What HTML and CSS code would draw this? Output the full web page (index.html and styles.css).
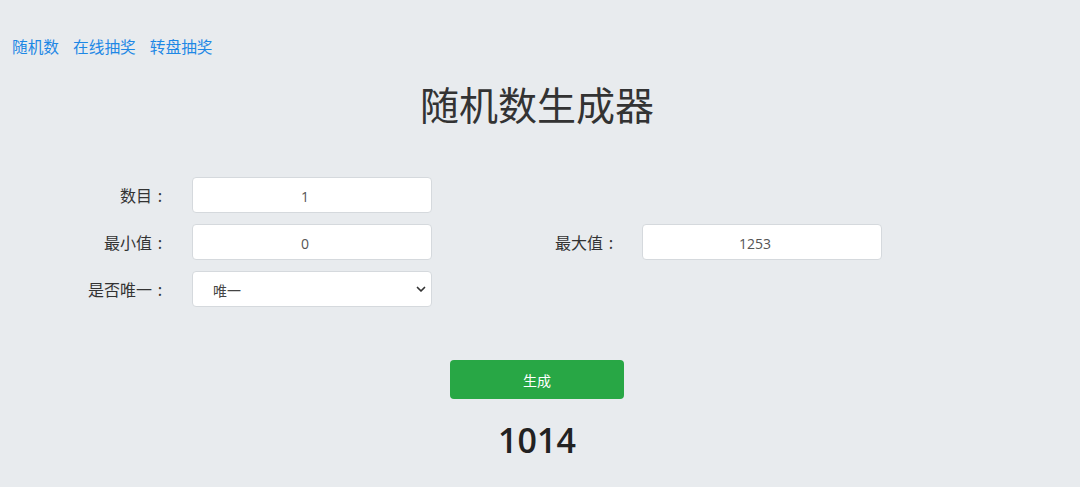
FILE: index.html
```html
<!DOCTYPE html>
<html lang="zh">
<head>
<meta charset="utf-8">
<title>随机数生成器</title>
<link rel="stylesheet" href="styles.css">
</head>
<body>
<div class="page">
  <nav class="nav">
    <a href="#">随机数</a>
    <a href="#">在线抽奖</a>
    <a href="#">转盘抽奖</a>
  </nav>
  <h1 class="title">随机数生成器</h1>
  <form class="form">
    <div class="row">
      <div class="group">
        <label class="label">数目<span class="colon">:</span></label>
        <input class="field" type="text" value="1">
      </div>
    </div>
    <div class="row">
      <div class="group">
        <label class="label">最小值<span class="colon">:</span></label>
        <input class="field" type="text" value="0">
      </div>
      <div class="group group-right">
        <label class="label">最大值<span class="colon">:</span></label>
        <input class="field" type="text" value="1253">
      </div>
    </div>
    <div class="row">
      <div class="group">
        <label class="label">是否唯一<span class="colon">:</span></label>
        <div class="select">
          <span>唯一</span>
          <svg class="chev" width="10" height="7" viewBox="0 0 10 7"><path d="M1.5 1.5 L5 5 L8.5 1.5" fill="none" stroke="#333" stroke-width="1.7" stroke-linecap="round" stroke-linejoin="round"/></svg>
        </div>
      </div>
    </div>
  </form>
  <div class="actions">
    <button class="btn" type="button">生成</button>
  </div>
  <div class="result">1014</div>
</div>
</body>
</html>
```

FILE: styles.css
```css
html, body {
  margin: 0;
  padding: 0;
  background: #e8ebee;
}
body {
  font-family: "Open Sans", "Noto Sans CJK SC", sans-serif;
  color: #333;
  height: 487px;
  overflow: hidden;
}
.page {
  width: 1074px;
}
.nav {
  display: flex;
  gap: 14px;
  padding: 36px 0 0 12px;
  height: 22px;
  font-size: 15.7px;
  line-height: 22px;
  font-family: "Noto Sans CJK SC", sans-serif;
}
.nav a {
  color: #1e88e5;
  text-decoration: none;
}
.title {
  margin: 16px 0 0;
  text-align: center;
  font-weight: 400;
  font-size: 39px;
  line-height: 58px;
  color: #333;
  font-family: "Noto Sans CJK SC", sans-serif;
}
.form {
  margin-top: 45px;
  display: flex;
  flex-direction: column;
  gap: 11px;
}
.row {
  display: flex;
  height: 36px;
}
.group {
  display: flex;
  align-items: center;
}
.label {
  width: 192px;
  padding-right: 24px;
  box-sizing: border-box;
  text-align: right;
  font-size: 16px;
  font-family: "Noto Sans CJK SC", sans-serif;
  color: #333;
}
.colon {
  display: inline-block;
  width: 16px;
  text-align: center;
}
.group-right .label {
  width: 210px;
  padding-right: 23px;
}
.field {
  width: 240px;
  height: 36px;
  box-sizing: border-box;
  border: 1px solid #d5d9dd;
  border-radius: 4px;
  background: #fff;
  text-align: center;
  font-family: "Open Sans", "Noto Sans CJK SC", sans-serif;
  font-size: 14px;
  color: #555;
  padding: 2px 14px 0 0;
  outline: none;
}
.select {
  width: 240px;
  height: 36px;
  box-sizing: border-box;
  border: 1px solid #d5d9dd;
  border-radius: 4px;
  background: #fff;
  display: flex;
  align-items: center;
  justify-content: space-between;
  padding: 2px 5px 0 20px;
  font-family: "Noto Sans CJK SC", sans-serif;
  font-size: 14px;
  color: #444;
}
.chev {
  margin-top: -2px;
}
.actions {
  display: flex;
  justify-content: center;
  margin-top: 53px;
}
.btn {
  width: 174px;
  height: 39px;
  border: none;
  border-radius: 4px;
  background: #28a745;
  color: #fff;
  font-family: "Noto Sans CJK SC", sans-serif;
  font-size: 14px;
  padding: 0;
}
.result {
  margin-top: 18px;
  text-align: center;
  font-size: 34px;
  font-weight: 600;
  line-height: 46px;
  color: #222;
  font-family: "Open Sans", sans-serif;
}
```
